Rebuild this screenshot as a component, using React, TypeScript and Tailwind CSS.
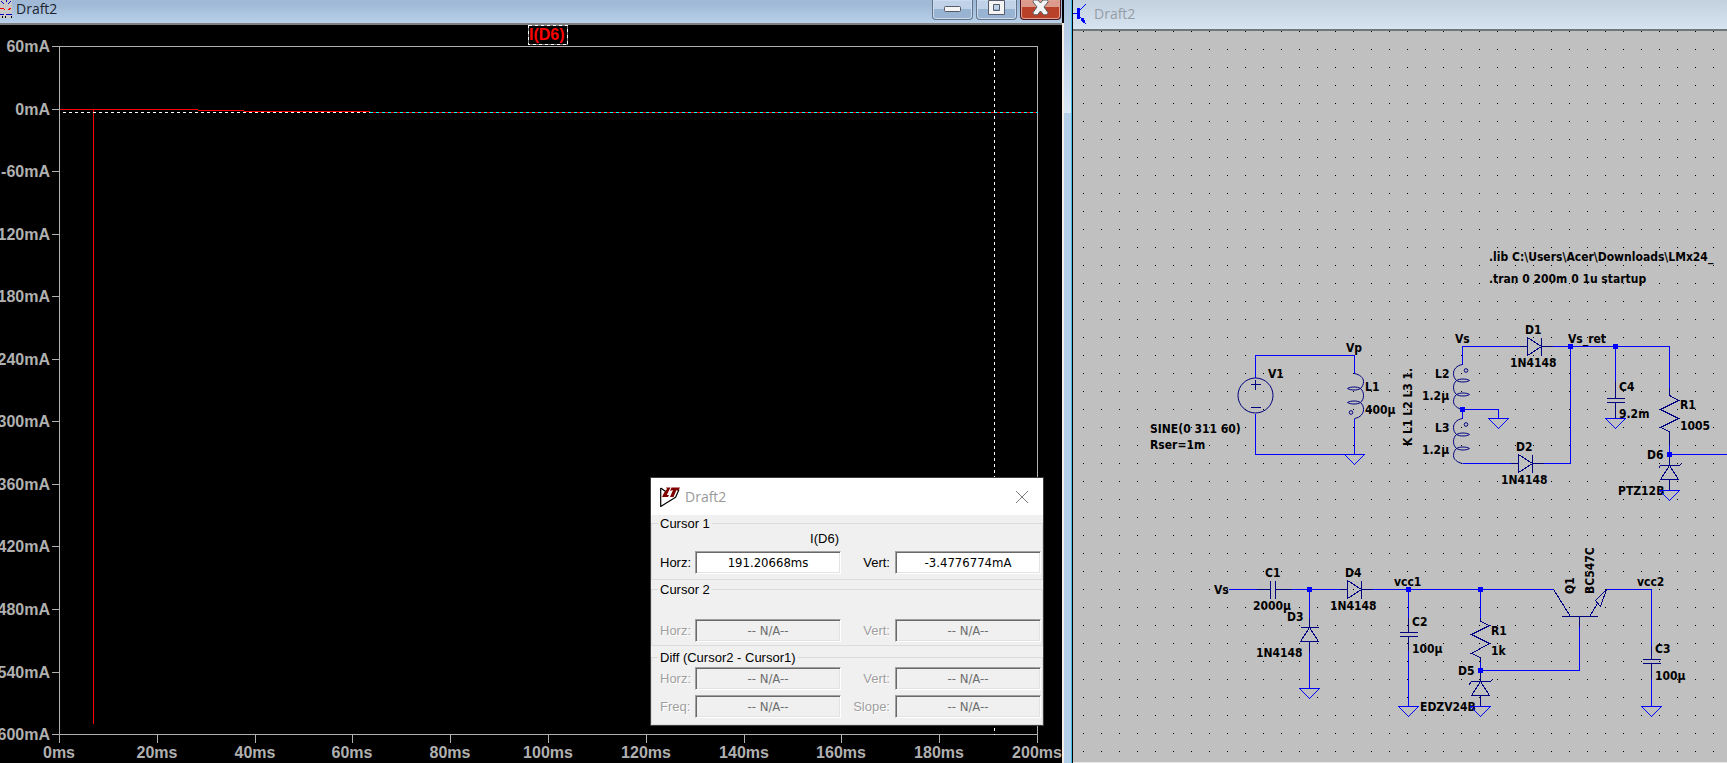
import React from "react";

const yTicks = ["60mA", "0mA", "-60mA", "-120mA", "-180mA", "-240mA", "-300mA", "-360mA", "-420mA", "-480mA", "-540mA", "-600mA"];
const xTicks = ["0ms", "20ms", "40ms", "60ms", "80ms", "100ms", "120ms", "140ms", "160ms", "180ms", "200ms"];

function Chart() {
  return (
    <svg viewBox="0 25 1062 738" className="block w-full font-['Liberation_Sans',Arial,sans-serif] text-base font-bold" role="img" aria-label="I(D6)">
      <g transform="translate(.5 .5)" fill="none" stroke="#b0b0b0" shapeRendering="crispEdges">
        <path d="M59 46H1037V734H59Z" />
        {yTicks.map((t, i) => (
          <path key={t} d={`M51 ${Math.round(46 + i * 62.55)}H59`} />
        ))}
        {xTicks.map((t, i) => (
          <path key={t} d={`M${Math.round(59 + i * 97.8)} 734V742`} />
        ))}
        <path stroke="#ff0000" d="M59 109H197M197 110H243M243 111H369M369 112H1037M93 109V723" />
        <path stroke="#ffffff" strokeDasharray="3 3" d="M62 112H369" />
        <path stroke="#00ffff" strokeDasharray="3 3" d="M369 112H1037" />
        <path stroke="#ffffff" strokeDasharray="3 3" d="M994 49V734" />
        <path stroke="#808080" d="M528 25H567V44H528Z" />
        <path stroke="#ffffff" strokeDasharray="3 3" d="M528 25H567V44H528Z" />
      </g>
      <text x="529" y="40" fill="#ff0000">I(D6)</text>
      <g fill="#b0b0b0">
        {yTicks.map((t, i) => (
          <text key={t} x="50" y={Math.round(52 + i * 62.55)} textAnchor="end">{t}</text>
        ))}
        {xTicks.map((t, i) => (
          <text key={t} x={Math.round(59 + i * 97.8)} y="758" textAnchor="middle">{t}</text>
        ))}
      </g>
    </svg>
  );
}

function Field({ id, label, value, disabled, right }: { id: string; label: string; value: string; disabled?: boolean; right?: boolean }) {
  return (
    <>
      <label
        htmlFor={id}
        className={`${right ? "pr-[5px] text-right" : ""} ${disabled ? "text-[#a0a0a0] [text-shadow:1px_1px_0_#fff]" : "text-black"}`}
      >
        {label}
      </label>
      <input
        id={id}
        defaultValue={value}
        disabled={disabled}
        className={`h-[23px] w-full border border-t-[#a0a0a0] border-r-white border-b-white border-l-[#a0a0a0] text-center font-['DejaVu_Sans_Condensed','DejaVu_Sans',sans-serif] text-[13px] shadow-[inset_1px_1px_0_#696969,inset_-1px_-1px_0_#e3e3e3] outline-none ${disabled ? "bg-[#f0f0f0] text-[#6d6d6d]" : "bg-white text-black"}`}
      />
    </>
  );
}

const row = "grid grid-cols-[35px_146px_54px_146px] items-center pl-2";
const legend = "ml-1.5 h-4 px-0.5 leading-[18px]";

function CursorDialog() {
  return (
    <section className="absolute top-[453px] left-[651px] w-[392px] bg-[#f0f0f0] font-['Liberation_Sans',Arial,sans-serif] text-[13px] leading-4 text-black outline outline-[#3c3c3c]">
      <header className="flex h-[37px] items-center bg-white pr-[14px] pl-[9px]">
        <svg viewBox="0 0 20 20" className="size-5">
          <path d="M.7 1v18.500L16 10M.7 1l5 3.600M15.500 10.500l3.500-8" fill="none" stroke="#000" strokeWidth="1.200" />
          <path d="M6 .500H10.500L6.800 8H9L8 10H2L4.200 5.500L7 2ZM11.500 .500H20L18 4L16.500 3L13.500 10H10L13 3L10 4Z" fill="#800000" />
        </svg>
        <h2 className="ml-[5px] font-['Open_Sans','Noto_Sans',sans-serif] text-sm text-[#999]">Draft2</h2>
        <button aria-label="Close" className="ml-auto">
          <svg viewBox="0 0 14 14" className="size-3.5">
            <path d="M1 1l12 12M13 1L1 13" stroke="#808080" fill="none" />
          </svg>
        </button>
      </header>
      <fieldset className="border border-[#dcdcdc] pb-[5px]">
        <legend className={legend}>Cursor 1</legend>
        <div className={row}>
          <span className="col-start-2 mb-[5px] pr-0.5 text-right leading-[15px]">I(D6)</span>
        </div>
        <div className={row}>
          <Field id="c1h" label="Horz:" value="191.20668ms" />
          <Field id="c1v" label="Vert:" value="-3.4776774mA" right />
        </div>
      </fieldset>
      <fieldset className="mt-px border border-[#dcdcdc] pb-[3px]">
        <legend className={legend}>Cursor 2</legend>
        <div className={`${row} pt-[22px]`}>
          <Field id="c2h" label="Horz:" value="-- N/A--" disabled />
          <Field id="c2v" label="Vert:" value="-- N/A--" disabled right />
        </div>
      </fieldset>
      <fieldset className="mt-[3px] border border-[#dcdcdc] pt-0.5 pb-1.5">
        <legend className={legend}>Diff (Cursor2 - Cursor1)</legend>
        <div className={`${row} gap-y-[5px]`}>
          <Field id="dh" label="Horz:" value="-- N/A--" disabled />
          <Field id="dv" label="Vert:" value="-- N/A--" disabled right />
          <Field id="df" label="Freq:" value="-- N/A--" disabled />
          <Field id="ds" label="Slope:" value="-- N/A--" disabled right />
        </div>
      </fieldset>
    </section>
  );
}

const Ground = ({ x, y }: { x: number; y: number }) => (
  <path d={`M${x - 10} ${y}H${x + 10}L${x} ${y + 10}Z`} stroke="#0000ff" />
);
const Node = ({ x, y }: { x: number; y: number }) => (
  <rect x={x - 2} y={y - 2} width="4" height="4" fill="#0000ff" stroke="#0000ff" />
);
const Coil = ({ transform }: { transform: string }) => (
  <g transform={transform} shapeRendering="auto">
    <path d="M0 0C-6 1-9 5-9 9C-9 12-8 14-6 16C-3 18 4 18 7 16C4 14-3 14-6 16C-8 18-9 20-9 23C-9 26-8 28-6 30C-3 32 4 32 7 30C4 28-3 28-6 30C-8 32-9 34-9 37C-9 41-5 44 0 45" />
    <circle cx="3.500" cy="6" r="1.800" />
  </g>
);
const Diode = ({ x, y }: { x: number; y: number }) => (
  <path d={`M${x - 8} ${y}H${x}M${x + 14} ${y}H${x + 25}M${x} ${y - 9}V${y + 9}L${x + 14} ${y}ZM${x + 14} ${y - 9}V${y + 9}`} />
);

const labels: [number, number, string][] = [
  [1489, 261, ".lib C:\\Users\\Acer\\Downloads\\LMx24_"],
  [1489, 283, ".tran 0 200m 0 1u startup"],
  [1346, 352, "Vp"], [1268, 378, "V1"], [1365, 391, "L1"], [1365, 414, "400µ"],
  [1150, 433, "SINE(0 311 60)"], [1150, 449, "Rser=1m"],
  [1525, 334, "D1"], [1510, 367, "1N4148"], [1455, 343, "Vs"], [1568, 343, "Vs_ret"],
  [1435, 378, "L2"], [1422, 400, "1.2µ"], [1435, 432, "L3"], [1422, 454, "1.2µ"],
  [1516, 451, "D2"], [1501, 484, "1N4148"], [1619, 391, "C4"], [1619, 418, "9.2m"],
  [1680, 409, "R1"], [1680, 430, "1005"], [1647, 459, "D6"], [1618, 495, "PTZ12B"],
  [1214, 594, "Vs"], [1265, 577, "C1"], [1345, 577, "D4"], [1253, 610, "2000µ"],
  [1287, 621, "D3"], [1330, 610, "1N4148"], [1256, 657, "1N4148"], [1394, 586, "vcc1"],
  [1412, 626, "C2"], [1412, 653, "100µ"], [1420, 711, "EDZV24B"],
  [1491, 635, "R1"], [1491, 655, "1k"], [1458, 675, "D5"], [1637, 586, "vcc2"],
  [1655, 653, "C3"], [1655, 680, "100µ"],
];
const turned: [number, number, string][] = [
  [1412, 446, "K L1 L2 L3 1."], [1574, 594, "Q1"], [1594, 594, "BC547C"],
];

function Schematic() {
  return (
    <svg viewBox="1073 31 654 732" className="block w-full bg-[#c0c0c0]" role="img" aria-label="Schematic">
      <defs>
        <pattern id="grid" x="1083" y="31" width="18" height="18" patternUnits="userSpaceOnUse">
          <rect width="1" height="1" fill="#000" />
        </pattern>
      </defs>
      <rect x="1073" y="31" width="654" height="731" fill="url(#grid)" />
      <g className="font-['DejaVu_Sans_Condensed','DejaVu_Sans',sans-serif] text-xs font-bold" fill="#000">
        {labels.map(([x, y, t]) => (
          <text key={`${x}-${y}`} x={x} y={y}>{t}</text>
        ))}
        {turned.map(([x, y, t]) => (
          <text key={t} transform={`translate(${x} ${y}) rotate(-90)`}>{t}</text>
        ))}
      </g>
      <g transform="translate(.5 .5)" fill="none" stroke="#000080" shapeRendering="crispEdges">
        <path
          stroke="#0000ff"
          d="M1255 377V355H1354V373M1255 413V454H1354V418M1462 364V346H1519M1552 346H1669V387M1462 418V409H1498V418M1570 346V463H1543M1462 463H1510M1615 346V380M1669 454H1727M1669 445V454M1228 589H1256M1291 589H1339M1372 589H1553M1309 589V617M1309 652V688M1408 589V617M1408 650V706M1480 589V617M1480 661V670H1579V626M1606 589H1651V645M1651 678V706"
        />
        <circle cx="1255" cy="395" r="17.500" shapeRendering="auto" />
        <path d="M1255 379V389M1250 384H1260M1250 407H1260" />
        <Coil transform="translate(1354 418) rotate(180)" />
        <Coil transform="translate(1462 364)" />
        <Coil transform="translate(1462 418)" />
        <Diode x={1527} y={346} />
        <Diode x={1518} y={463} />
        <Diode x={1347} y={589} />
        <path d="M1615 380V398M1606 398H1624M1606 402H1624M1615 402V418" />
        <path d="M1669 387V395L1678 400L1660 409L1678 418L1660 427L1669 431V445" />
        <path d="M1669 454V465L1660 479H1678L1669 465M1669 479V490M1658 468L1660 465H1679L1681 463" />
        <path d="M1256 589H1270M1270 580V598M1275 580V598M1275 589H1291" />
        <path d="M1309 617V627L1300 641H1318L1309 627M1300 627H1318M1309 641V652" />
        <path d="M1408 617V632M1399 632H1417M1399 636H1417M1408 636V650" />
        <path d="M1480 617V621L1489 625L1471 634L1489 643L1471 653L1480 657V661" />
        <path d="M1480 670V681L1471 695H1489L1480 681M1480 695V706M1468 685L1471 681H1490L1492 679" />
        <path d="M1553 589L1570 616M1561 616H1597M1579 616V626M1589 616L1597 603M1606 589L1595 600L1600 606Z" />
        <path d="M1651 645V659M1642 659H1660M1642 663H1660M1651 663V678" />
        <Ground x={1354} y={454} />
        <Ground x={1498} y={418} />
        <Ground x={1615} y={418} />
        <Ground x={1669} y={490} />
        <Ground x={1309} y={688} />
        <Ground x={1408} y={706} />
        <Ground x={1480} y={706} />
        <Ground x={1651} y={706} />
        <Node x={1570} y={346} />
        <Node x={1615} y={346} />
        <Node x={1462} y={409} />
        <Node x={1669} y={454} />
        <Node x={1309} y={589} />
        <Node x={1408} y={589} />
        <Node x={1480} y={589} />
        <Node x={1480} y={670} />
      </g>
      <rect x="1073" y="762" width="654" height="1" fill="#e8e8e8" />
    </svg>
  );
}

const caption = "flex h-5 w-[41px] items-start justify-center rounded-b border border-t-0";
const blueCaption = "border-[#63748a] bg-linear-to-b from-[#bfd2e8] from-50% to-[#98b4d2] to-50% shadow-[inset_0_0_0_1px_#ccdcee]";

export default function App() {
  return (
    <main className="flex min-h-screen bg-black">
      <section className="relative min-w-0 flex-[1062_1_0]">
        <header className="flex h-[23px] items-start bg-linear-to-b from-[#a0b9d6] from-20% to-[#b9d1ea]">
          <svg viewBox="0 0 12 18" className="h-[18px] w-3 shrink-0" shapeRendering="crispEdges">
            <rect width="12" height="18" fill="#c8c8c8" />
            <path d="M1 1l3 3M6 0v2M11 1L8 4M0 14.500h4M6 14.500h6" stroke="#0000c8" fill="none" />
            <path d="M0 8.500h3l2 1M8 9.500l3-1" stroke="#ff0000" fill="none" />
            <path d="M2 17h1M5 17h1M11 17h1" stroke="#000" strokeWidth="2" />
          </svg>
          <h1 className="ml-1 font-['Open_Sans','Noto_Sans',sans-serif] text-sm leading-[17px] text-[#1c2530]">Draft2</h1>
          <div className="ml-auto flex gap-[3px] pr-px">
            <button aria-label="Minimize" className={`${caption} ${blueCaption}`}>
              <svg viewBox="0 0 17 16" className="h-4 w-[17px]">
                <rect x=".5" y="6.500" width="16" height="5" rx="1" fill="#f4f4f4" stroke="#555b68" />
              </svg>
            </button>
            <button aria-label="Maximize" className={`${caption} ${blueCaption}`}>
              <svg viewBox="0 0 17 16" className="h-4 w-[17px]">
                <path fillRule="evenodd" d="M.5.500h16v14H.5ZM5.500 4.500v6h6v-6Z" fill="#f4f4f4" stroke="#555b68" />
              </svg>
            </button>
            <button aria-label="Close window" className={`${caption} border-[#4a1420] bg-linear-to-b from-[#dc9a8c] from-35% to-[#b9412a] to-35% shadow-[inset_0_0_0_1px_#e0a090]`}>
              <svg viewBox="0 0 17 16" className="h-4 w-[17px]">
                <path d="M.7 1.500L2.500 0H6L8.500 3L11 0H14.500L16.300 1.500L12 7L16.300 13L14.500 14.800H11.500L8.500 11L5.500 14.800H2.500L.7 13L5 7Z" fill="#f4f4f4" stroke="#555b68" />
              </svg>
            </button>
          </div>
        </header>
        <div className="relative border-t-2 border-[#808080]">
          <Chart />
          <CursorDialog />
        </div>
      </section>
      <div className="flex w-[11px] shrink-0">
        <div className="mt-[23px] w-0.5 bg-[#f4f0e8]" />
        <div className="w-[7px] bg-[#b6cfe9]">
          <div className="h-[113px] bg-linear-to-b from-[#a9c2de] to-[#dbe8f5]" />
        </div>
        <div className="w-px bg-[#3fc0e8]" />
        <div className="mt-[23px] w-px bg-black" />
      </div>
      <section className="min-w-0 flex-[654_1_0]">
        <header className="flex h-[31px] items-start border-b-2 border-[#70787c] bg-linear-to-b from-[#c3d0de] to-[#d6e3f1]">
          <svg viewBox="0 0 14 26" className="h-[26px] w-3.5 shrink-0" fill="none" stroke="#0000ff" shapeRendering="crispEdges">
            <path d="M0 13.500h4" />
            <path d="M5 8v11" strokeWidth="3" />
            <path d="M6 11L13 4M6 16L12 22" />
            <path d="M8 20l2-2l2 5Z" fill="#0000ff" />
          </svg>
          <h1 className="ml-[7px] font-['Open_Sans','Noto_Sans',sans-serif] text-sm leading-[28px] text-[#969da5]">Draft2</h1>
        </header>
        <Schematic />
      </section>
    </main>
  );
}
